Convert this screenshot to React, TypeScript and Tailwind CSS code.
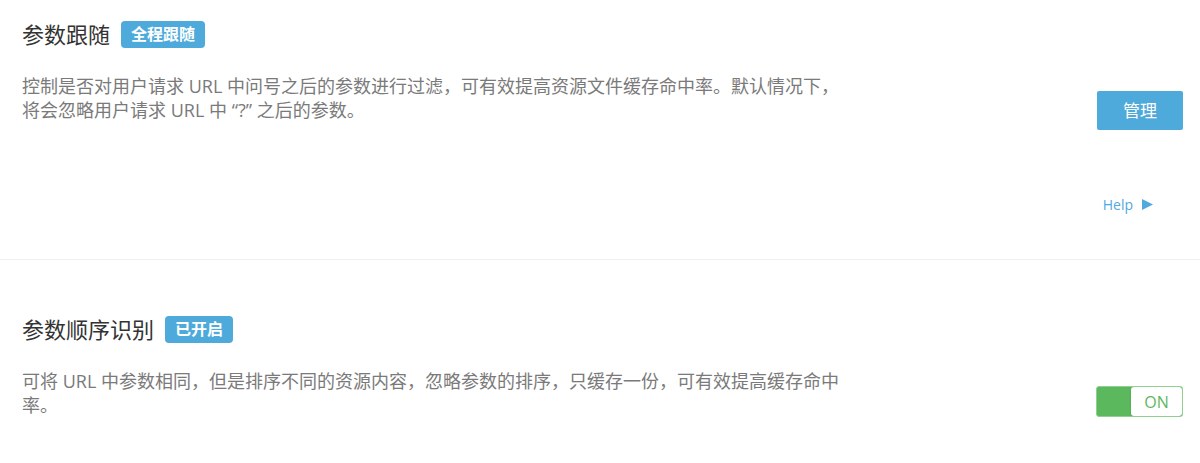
import React from 'react';

const font = { fontFamily: '"Open Sans", "Noto Sans CJK SC", sans-serif' };

function Badge({ children }: { children: React.ReactNode }) {
  return (
    <span className="ml-[11px] inline-flex h-[27px] items-center rounded-[4px] bg-[#4eaada] px-[10px] text-[16px] font-bold leading-none text-white">
      {children}
    </span>
  );
}

export default function App() {
  return (
    <div className="min-h-screen w-full bg-white" style={font}>
      {/* 参数跟随 */}
      <section className="flex h-[260px] border-b border-[#efefef]">
        <div className="flex-1 pl-[22px] pt-[20px]">
          <div className="flex items-center">
            <h2 className="text-[22px] leading-[28px] text-[#333]">参数跟随</h2>
            <Badge>全程跟随</Badge>
          </div>
          <p className="mt-[26px] w-[826px] text-[18px] leading-[24px] text-[#7a7a7a]">
            控制是否对用户请求 URL 中问号之后的参数进行过滤，可有效提高资源文件缓存命中率。默认情况下，将会忽略用户请求 URL 中 “?” 之后的参数。
          </p>
        </div>
        <div className="flex w-[200px] flex-col items-end pr-[17px] pt-[91px]">
          <button className="h-[39px] w-[86px] rounded-[2px] bg-[#4eaada] text-[17px] text-white">管理</button>
          <a className="mr-[30px] mt-[64px] flex items-center gap-[9px] text-[14px] text-[#52a9dd]">
            Help
            <svg width="11" height="11" viewBox="0 0 11 11">
              <path d="M0 0 L11 5.5 L0 11 Z" fill="#52a9dd" />
            </svg>
          </a>
        </div>
      </section>

      {/* 参数顺序识别 */}
      <section className="flex">
        <div className="flex-1 pl-[22px] pt-[55px]">
          <div className="flex items-center">
            <h2 className="text-[22px] leading-[28px] text-[#333]">参数顺序识别</h2>
            <Badge>已开启</Badge>
          </div>
          <p className="mt-[26px] w-[826px] text-[18px] leading-[24px] text-[#7a7a7a]">
            可将 URL 中参数相同，但是排序不同的资源内容，忽略参数的排序，只缓存一份，可有效提高缓存命中率。
          </p>
        </div>
        <div className="flex w-[200px] flex-col items-end pr-[17px] pt-[126px]">
          <div className="flex h-[31px] w-[87px] overflow-hidden rounded-[3px] border border-[#8fcf8f] bg-[#5cb85c]">
            <span className="w-[34px]" />
            <span className="flex flex-1 items-center justify-center rounded-[3px] bg-white text-[16px] text-[#5cb85c] shadow-[0_1px_2px_rgba(0,0,0,0.15)]">
              ON
            </span>
          </div>
        </div>
      </section>
    </div>
  );
}
